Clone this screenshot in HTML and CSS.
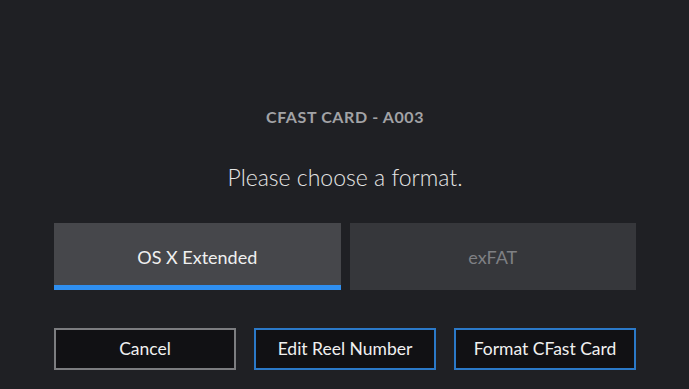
FILE: index.html
```html
<!DOCTYPE html>
<html lang="en">
<head>
    <meta charset="UTF-8">
    <meta name="viewport" content="width=device-width, initial-scale=1.0">
    <title>Format Card</title>
    <link rel="stylesheet" href="styles.css">
</head>
<body>
    <div class="dialog">
        <h1 class="card-title">CFAST CARD - A003</h1>
        <p class="prompt">Please choose a format.</p>
        <div class="formats">
            <div class="format active">OS X Extended</div>
            <div class="format">exFAT</div>
        </div>
        <div class="actions">
            <button class="btn btn-cancel">Cancel</button>
            <button class="btn">Edit Reel Number</button>
            <button class="btn">Format CFast Card</button>
        </div>
    </div>
</body>
</html>
```

FILE: styles.css
```css
body {
    margin: 0;
    background-color: #1f2024;
    font-family: Lato, "Open Sans", sans-serif;
    color: #e8e8e8;
}
.dialog {
    width: 582px;
    margin: 0 auto 0 54px;
    padding-top: 107px;
}
.card-title {
    margin: 0;
    text-align: center;
    font-size: 16px;
    line-height: 20px;
    font-weight: 700;
    letter-spacing: 0.6px;
    color: #a2a3a6;
}
.prompt {
    margin: 35px 0 0;
    text-align: center;
    font-size: 23px;
    line-height: 30px;
    font-weight: 300;
    color: #e6e6e6;
}
.formats {
    display: flex;
    gap: 9px;
    margin-top: 31px;
}
.format {
    flex: 1;
    height: 67px;
    display: flex;
    align-items: center;
    justify-content: center;
    box-sizing: border-box;
    background-color: #36373b;
    color: #7f8084;
    font-size: 18px;
    padding-top: 1px;
}
.format.active {
    background-color: #46474b;
    color: #f0f0f0;
    border-bottom: 5px solid #2f8ff0;
    padding-top: 6px;
}
.actions {
    display: flex;
    gap: 18px;
    margin-top: 38px;
}
.btn {
    flex: 1;
    height: 42px;
    background-color: #111114;
    border: 2px solid #2b79c8;
    color: #f0f0f0;
    font-family: Lato, "Open Sans", sans-serif;
    font-size: 17.5px;
    padding: 0 0 2px;
    cursor: pointer;
}
.btn-cancel {
    border-color: #7c7d80;
}
```
